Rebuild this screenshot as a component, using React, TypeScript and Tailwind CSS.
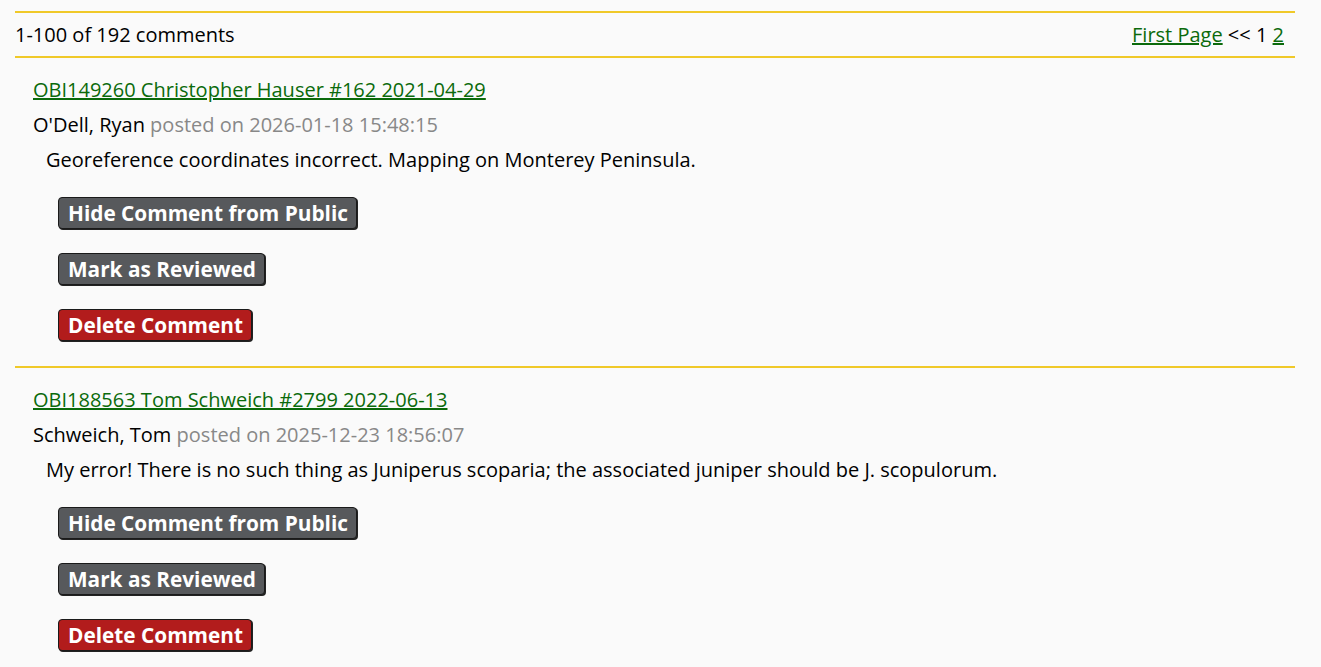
import React from "react";

type Comment = {
  link: string;
  name: string;
  date: string;
  text: string;
};

const comments: Comment[] = [
  {
    link: "OBI149260 Christopher Hauser #162 2021-04-29",
    name: "O'Dell, Ryan",
    date: "2026-01-18 15:48:15",
    text: "Georeference coordinates incorrect. Mapping on Monterey Peninsula.",
  },
  {
    link: "OBI188563 Tom Schweich #2799 2022-06-13",
    name: "Schweich, Tom",
    date: "2025-12-23 18:56:07",
    text: "My error! There is no such thing as Juniperus scoparia; the associated juniper should be J. scopulorum.",
  },
];

function Btn({ label, red }: { label: string; red?: boolean }) {
  return (
    <button
      className={
        red
          ? "h-[32px] pl-[9px] pr-[8px] rounded-[4px] border border-[#1a1a1a] shadow-[1px_1px_0_#222] bg-[#b21c1c] text-white font-bold text-[20.8px] leading-none"
          : "h-[32px] pl-[9px] pr-[8px] rounded-[4px] border border-[#1a1a1a] shadow-[1px_1px_0_#222] bg-[#57595c] text-white font-bold text-[20.8px] leading-none"
      }
    >
      {label}
    </button>
  );
}

export default function App() {
  return (
    <div
      className="min-h-[667px] bg-[#fafafa] text-black pt-[11px]"
      style={{ fontFamily: '"Open Sans", "Noto Sans", sans-serif' }}
    >
      <div className="ml-[15px] w-[1280px]">
        <div className="h-[47px] border-y-2 border-[#f0c929] flex items-center justify-between text-[20px]">
          <div>1-100 of 192 comments</div>
          <div className="pr-[11px]">
            <a href="#" className="text-[#0b6a0b] underline">
              First Page
            </a>{" "}
            <span>&lt;&lt; 1 </span>
            <a href="#" className="text-[#0b6a0b] underline">
              2
            </a>
          </div>
        </div>
        {comments.map((c, i) => (
          <div
            key={i}
            className="border-b-2 border-[#f0c929] pl-[18px] pt-[19px] pb-[25px] text-[20px]"
          >
            <a
              href="#"
              className="block w-fit text-[#0b6a0b] underline leading-[26px]"
            >
              {c.link}
            </a>
            <div className="mt-[9px] leading-[26px]">
              <span>{c.name}</span>{" "}
              <span className="text-[#888888]">posted on {c.date}</span>
            </div>
            <div className="mt-[9px] leading-[26px] pl-[13px]">{c.text}</div>
            <div className="mt-[24px] pl-[25px] flex flex-col items-start gap-[24px]">
              <Btn label="Hide Comment from Public" />
              <Btn label="Mark as Reviewed" />
              <Btn label="Delete Comment" red />
            </div>
          </div>
        ))}
      </div>
    </div>
  );
}
